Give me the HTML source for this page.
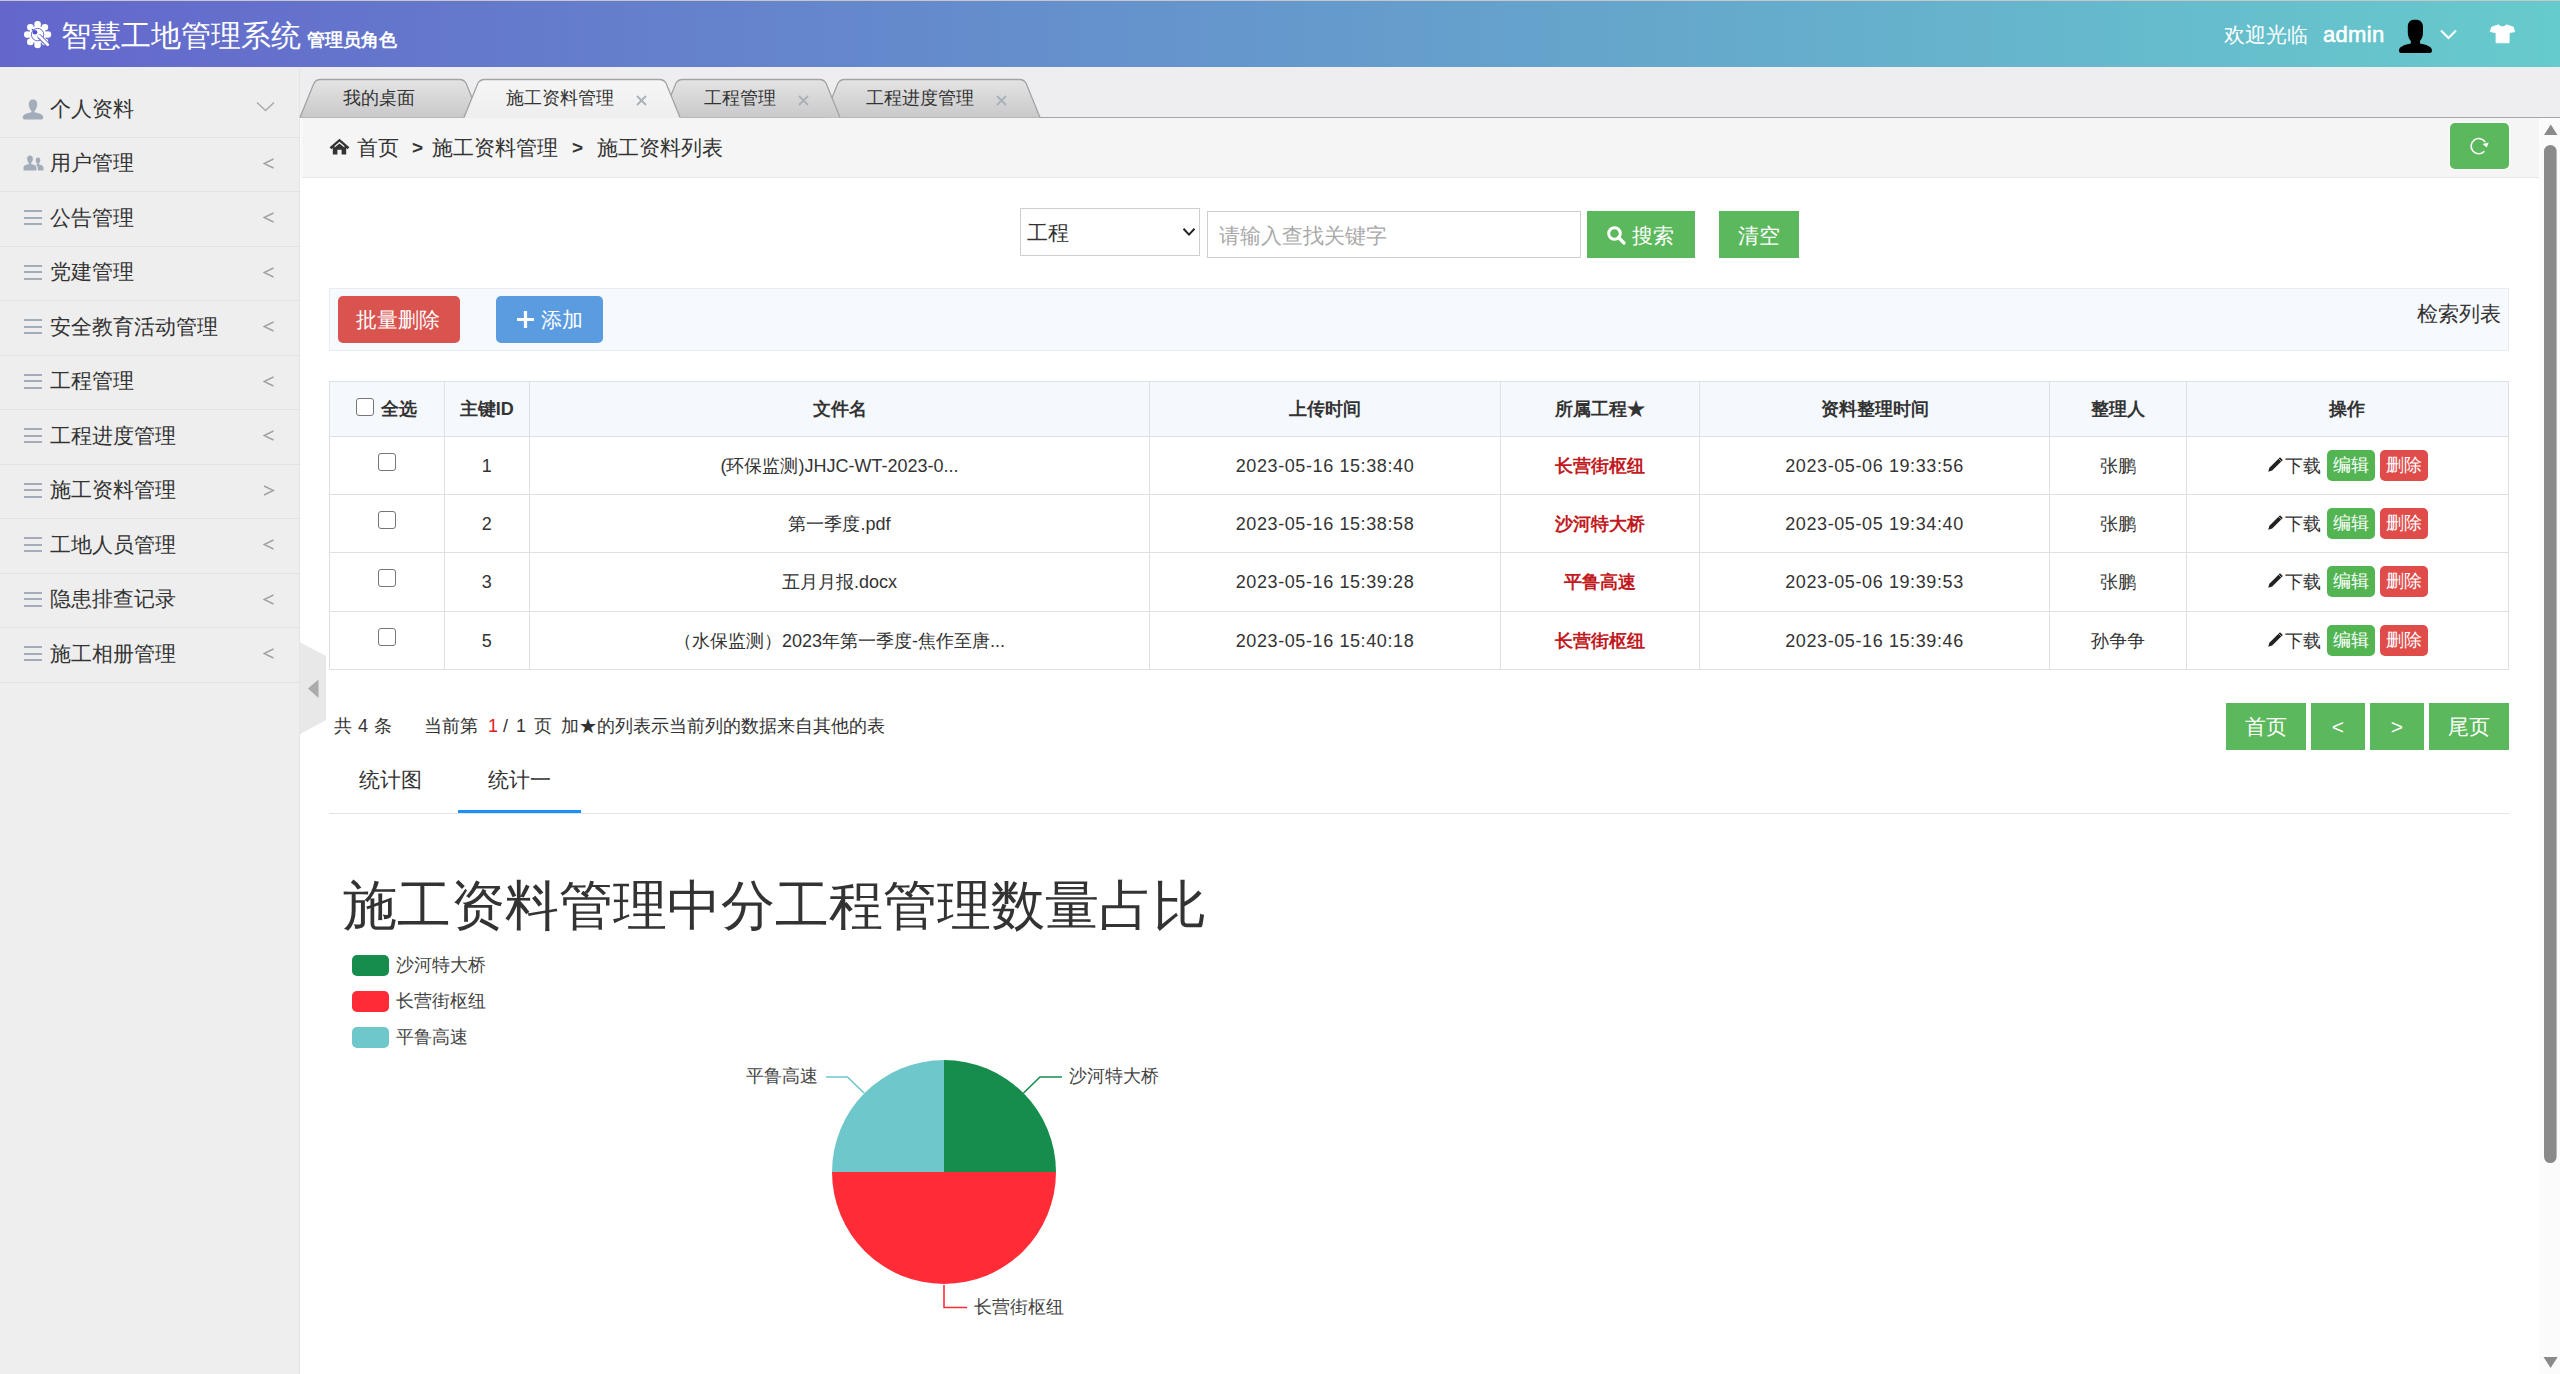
<!DOCTYPE html>
<html><head><meta charset="utf-8">
<style>
*{box-sizing:border-box;margin:0;padding:0}
html,body{width:2560px;height:1374px;overflow:hidden;background:#fff;font-family:"Liberation Sans",sans-serif;color:#333}
.a{position:absolute;white-space:nowrap}
#hdr{left:0;top:0;width:2560px;height:67px;background:linear-gradient(to right,#6466cc,#66cbcc)}
#hdr .topline{left:0;top:0;width:2560px;height:1px;background:#c6c6cc}
#side{left:0;top:67px;width:300px;height:1307px;background:#eeeeee}
.sitem{left:0;width:299px;height:20px}
.sdiv{left:0;width:299px;height:1px;background:#e2e2e2}
.sdiv2{left:0;width:299px;height:1px;background:#e9e9e9}
.stxt{left:50px;font-size:21px;line-height:24px;color:#333}
.sarr{left:262px;font-size:16px;color:#999}
.ham{left:24px;width:18px;height:14px}
.ham i{position:absolute;left:0;width:18px;height:2px;background:#a3acba}
#tabbar{left:300px;top:67px;width:2260px;height:51px;background:#eeeef0}
.ttxt{font-size:18px;line-height:20px;color:#333}
.tx{font-size:17px;line-height:20px;color:#aab2bc}
#frame{left:300px;top:118px;width:2239px;height:1256px;background:#fff}
#crumb{left:0;top:0;width:2239px;height:60px;background:#f5f5f5;border-bottom:1px solid #e5e5e5;border-left:2px solid #f9f9f9}
.btn{color:#fff;text-align:center}
.green{background:#5cb85c}
.red{background:#d9534f}
.tc{text-align:center;font-size:18px;color:#333}
.cb{display:inline-block;width:18px;height:18px;border:1.5px solid #767676;border-radius:3px;background:#fff;vertical-align:middle}
.sbtn{display:inline-block;width:48px;height:31px;line-height:31px;border-radius:5px;color:#fff;vertical-align:middle;position:relative;top:-2px}
.pbtn{top:703px;height:47px;line-height:47px;background:#5cb85c;color:#fff;font-size:21px;text-align:center}
.leg{left:396px;font-size:18px;line-height:24px;color:#444}
</style></head>
<body>
<!-- HEADER -->
<div id="hdr" class="a">
  <div class="a topline"></div>
  <svg class="a" style="left:23px;top:20px" width="30" height="30" viewBox="-14.6 -14.6 30 30">
    <circle cx="0" cy="0" r="8.8" fill="#fff"/><circle cx="0.00" cy="-10.30" r="3.3" fill="#fff"/><circle cx="7.28" cy="-7.28" r="3.3" fill="#fff"/><circle cx="10.30" cy="0.00" r="3.3" fill="#fff"/><circle cx="7.28" cy="7.28" r="3.3" fill="#fff"/><circle cx="0.00" cy="10.30" r="3.3" fill="#fff"/><circle cx="-7.28" cy="7.28" r="3.3" fill="#fff"/><circle cx="-10.30" cy="0.00" r="3.3" fill="#fff"/><circle cx="-7.28" cy="-7.28" r="3.3" fill="#fff"/>
    <circle cx="0" cy="0" r="6.2" fill="none" stroke="#5a5cc8" stroke-width="0.9"/>
    <path d="M2.2,2.2 L10.2,10.2" stroke="#5a5cc8" stroke-width="4.6" stroke-linecap="round"/>
    <path d="M1.5,1.5 L10.2,10.2" stroke="#fff" stroke-width="2.8" stroke-linecap="round"/>
    <circle cx="-2.6" cy="-2.4" r="2.3" fill="#4f52d0"/>
    <path d="M-4.6,-3.6 L-3.6,-4.6 L-5.6,-6.2 L-6.2,-5.6 Z" fill="#4f52d0"/>
  </svg>
  <div class="a" style="left:61px;top:18px;font-size:30px;line-height:36px;color:#fff">智慧工地管理系统</div>
  <div class="a" style="left:307px;top:28px;font-size:18px;line-height:24px;color:#fff;font-weight:bold">管理员角色</div>
  <div class="a" style="left:2224px;top:22px;font-size:21px;line-height:25px;color:#fff">欢迎光临</div>
  <div class="a" style="left:2323px;top:22px;font-size:22px;line-height:25px;color:#fff;-webkit-text-stroke:0.6px #fff;letter-spacing:0.3px">admin</div>
  <svg class="a" style="left:2397px;top:18px" width="37" height="37" viewBox="0 0 37 37">
    <path d="M17.5,1.8 C13,1.8 10.8,4.5 10.8,9 L10.8,14.5 C10.8,18.5 12.3,21.5 13.8,23 L13.8,25.5 C8,26.5 2,28.5 2,32.5 C2,34.5 3,35 5,35 L32,35 C34,35 35,34.5 35,32.5 C35,28.5 29,26.5 23,25.5 L23,23 C24.5,21.5 26,18.5 26,14.5 L26,9 C26,4.5 23.5,1.8 18.5,1.8 Z" fill="#000"/>
  </svg>
  <svg class="a" style="left:2439px;top:28px" width="19" height="12" viewBox="0 0 19 12">
    <polyline points="2,2.5 9.5,10 17,2.5" fill="none" stroke="#fff" stroke-width="2"/>
  </svg>
  <svg class="a" style="left:2489px;top:23px" width="27" height="21" viewBox="0 0 27 21">
    <path d="M9.6,1.8 Q13.4,5.8 17.6,1.8 L24.2,4 L25.8,8.6 L20.2,9.8 L20.2,19.8 L7,19.8 L7,9.8 L1.2,8.6 L2.8,4 Z" fill="#fff" stroke="#fff" stroke-width="0.8" stroke-linejoin="round"/>
  </svg>
</div>
</div>
<div class="a" style="left:0;top:67px;width:2560px;height:1px;background:#f2eef4"></div>
<div class="a" style="left:0;top:68px;width:2560px;height:1px;background:#e6e8f4"></div>

<!-- SIDEBAR -->
<div id="side" class="a"></div>
<div class="a stxt" style="top:96.5px">个人资料</div>
<svg class="a" style="left:22px;top:98.5px" width="22" height="21" viewBox="0 0 22 21"><path d="M11,0.5 C8,0.5 6.6,2.6 6.8,5.5 C7,8.2 8,10.5 9.5,12 L9.5,13.3 C6,14.2 1.5,15 0.8,17.8 C0.6,19.2 1.2,20.5 2.5,20.5 L19.5,20.5 C20.8,20.5 21.4,19.2 21.2,17.8 C20.5,15 16,14.2 12.5,13.3 L12.5,12 C14,10.5 15,8.2 15.2,5.5 C15.4,2.6 14,0.5 11,0.5Z" fill="#a3acba"/></svg>
<svg class="a" style="left:256px;top:101px" width="19" height="11" viewBox="0 0 19 11"><polyline points="1,1.5 9.5,9.5 18,1.5" fill="none" stroke="#aaa" stroke-width="1.5"/></svg>
<div class="a sdiv" style="top:136.5px"></div>
<div class="a stxt" style="top:151.0px">用户管理</div>
<svg class="a" style="left:23px;top:155.0px" width="21" height="16" viewBox="0 0 21 16"><path d="M7,0.5 C5,0.5 4,2 4.1,4 C4.2,5.8 5,7.3 6,8.2 L6,9 C3.5,9.6 0.6,10.3 0.5,12.5 L0.5,15.5 L13.5,15.5 L13.5,12.5 C13.4,10.3 10.5,9.6 8,9 L8,8.2 C9,7.3 9.8,5.8 9.9,4 C10,2 9,0.5 7,0.5Z" fill="#a3acba"/><path d="M15,2.5 C13.4,2.5 12.6,3.7 12.7,5.3 C12.8,6.7 13.4,7.9 14.2,8.6 L14.2,9.3 C13.6,9.5 13.2,9.7 12.9,9.9 C14,10.6 14.8,11.5 14.8,12.8 L14.8,15.5 L20.5,15.5 L20.5,12.5 C20.4,10.8 18,10 15.8,9.3 L15.8,8.6 C16.6,7.9 17.2,6.7 17.3,5.3 C17.4,3.7 16.6,2.5 15,2.5Z" fill="#a3acba"/></svg>
<svg class="a" style="left:263px;top:157.5px" width="12" height="11" viewBox="0 0 12 11"><polyline points="10.5,1 1,5.5 10.5,10" fill="none" stroke="#a0a0a0" stroke-width="1.4"/></svg>
<div class="a sdiv" style="top:191.0px"></div>
<div class="a stxt" style="top:205.5px">公告管理</div>
<div class="a ham" style="top:210.0px"><i style="top:0"></i><i style="top:6.5px"></i><i style="top:13px"></i></div>
<svg class="a" style="left:263px;top:212.0px" width="12" height="11" viewBox="0 0 12 11"><polyline points="10.5,1 1,5.5 10.5,10" fill="none" stroke="#a0a0a0" stroke-width="1.4"/></svg>
<div class="a sdiv" style="top:245.5px"></div>
<div class="a stxt" style="top:260.0px">党建管理</div>
<div class="a ham" style="top:264.5px"><i style="top:0"></i><i style="top:6.5px"></i><i style="top:13px"></i></div>
<svg class="a" style="left:263px;top:266.5px" width="12" height="11" viewBox="0 0 12 11"><polyline points="10.5,1 1,5.5 10.5,10" fill="none" stroke="#a0a0a0" stroke-width="1.4"/></svg>
<div class="a sdiv" style="top:300.0px"></div>
<div class="a stxt" style="top:314.5px">安全教育活动管理</div>
<div class="a ham" style="top:319.0px"><i style="top:0"></i><i style="top:6.5px"></i><i style="top:13px"></i></div>
<svg class="a" style="left:263px;top:321.0px" width="12" height="11" viewBox="0 0 12 11"><polyline points="10.5,1 1,5.5 10.5,10" fill="none" stroke="#a0a0a0" stroke-width="1.4"/></svg>
<div class="a sdiv" style="top:354.5px"></div>
<div class="a stxt" style="top:369.0px">工程管理</div>
<div class="a ham" style="top:373.5px"><i style="top:0"></i><i style="top:6.5px"></i><i style="top:13px"></i></div>
<svg class="a" style="left:263px;top:375.5px" width="12" height="11" viewBox="0 0 12 11"><polyline points="10.5,1 1,5.5 10.5,10" fill="none" stroke="#a0a0a0" stroke-width="1.4"/></svg>
<div class="a sdiv" style="top:409.0px"></div>
<div class="a stxt" style="top:423.5px">工程进度管理</div>
<div class="a ham" style="top:428.0px"><i style="top:0"></i><i style="top:6.5px"></i><i style="top:13px"></i></div>
<svg class="a" style="left:263px;top:430.0px" width="12" height="11" viewBox="0 0 12 11"><polyline points="10.5,1 1,5.5 10.5,10" fill="none" stroke="#a0a0a0" stroke-width="1.4"/></svg>
<div class="a sdiv" style="top:463.5px"></div>
<div class="a stxt" style="top:478.0px">施工资料管理</div>
<div class="a ham" style="top:482.5px"><i style="top:0"></i><i style="top:6.5px"></i><i style="top:13px"></i></div>
<svg class="a" style="left:263px;top:484.5px" width="12" height="11" viewBox="0 0 12 11"><polyline points="1,1 10.5,5.5 1,10" fill="none" stroke="#a0a0a0" stroke-width="1.4"/></svg>
<div class="a sdiv" style="top:518.0px"></div>
<div class="a stxt" style="top:532.5px">工地人员管理</div>
<div class="a ham" style="top:537.0px"><i style="top:0"></i><i style="top:6.5px"></i><i style="top:13px"></i></div>
<svg class="a" style="left:263px;top:539.0px" width="12" height="11" viewBox="0 0 12 11"><polyline points="10.5,1 1,5.5 10.5,10" fill="none" stroke="#a0a0a0" stroke-width="1.4"/></svg>
<div class="a sdiv" style="top:572.5px"></div>
<div class="a stxt" style="top:587.0px">隐患排查记录</div>
<div class="a ham" style="top:591.5px"><i style="top:0"></i><i style="top:6.5px"></i><i style="top:13px"></i></div>
<svg class="a" style="left:263px;top:593.5px" width="12" height="11" viewBox="0 0 12 11"><polyline points="10.5,1 1,5.5 10.5,10" fill="none" stroke="#a0a0a0" stroke-width="1.4"/></svg>
<div class="a sdiv" style="top:627.0px"></div>
<div class="a stxt" style="top:641.5px">施工相册管理</div>
<div class="a ham" style="top:646.0px"><i style="top:0"></i><i style="top:6.5px"></i><i style="top:13px"></i></div>
<svg class="a" style="left:263px;top:648.0px" width="12" height="11" viewBox="0 0 12 11"><polyline points="10.5,1 1,5.5 10.5,10" fill="none" stroke="#a0a0a0" stroke-width="1.4"/></svg>
<div class="a sdiv" style="top:681.5px"></div>
<div class="a" style="left:299px;top:69px;width:1px;height:1305px;background:#e4e4e4"></div>
<div class="a" style="left:300px;top:69px;width:2px;height:1305px;background:#fbfbfb"></div>

<!-- TABBAR -->
<div id="tabbar" class="a"></div>
<div class="a" style="left:300px;top:116.5px;width:2260px;height:1.3px;background:#a6a6a6"></div>
<svg class="a" style="left:0;top:0" width="1100" height="125">
<defs><linearGradient id="gi" x1="0" y1="0" x2="0" y2="1"><stop offset="0" stop-color="#e4e4e4"/><stop offset="1" stop-color="#c9c9cb"/></linearGradient>
<linearGradient id="ga" x1="0" y1="0" x2="0" y2="1"><stop offset="0" stop-color="#f6f6f6"/><stop offset="1" stop-color="#eeeeee"/></linearGradient></defs>

<path d="M824,117.5 L824,117.5 L837.8,83.5 Q840,79.5 844.5,79.5 L1019.5,79.5 Q1024,79.5 1026.2,83.5 L1040,117.5 L1040,117.5 Z" fill="url(#gi)"/>
<path d="M824,117.5 L837.8,83.5 Q840,79.5 844.5,79.5 L1019.5,79.5 Q1024,79.5 1026.2,83.5 L1040,117.5" fill="none" stroke="#a3a3a3" stroke-width="1.3"/>
<path d="M662,117.5 L662,117.5 L675.8,83.5 Q678,79.5 682.5,79.5 L819.5,79.5 Q824,79.5 826.2,83.5 L840,117.5 L840,117.5 Z" fill="url(#gi)"/>
<path d="M662,117.5 L675.8,83.5 Q678,79.5 682.5,79.5 L819.5,79.5 Q824,79.5 826.2,83.5 L840,117.5" fill="none" stroke="#a3a3a3" stroke-width="1.3"/>
<path d="M300,117.5 L300,117.5 L313.8,83.5 Q316,79.5 320.5,79.5 L459.5,79.5 Q464,79.5 466.2,83.5 L480,117.5 L480,117.5 Z" fill="url(#gi)"/>
<path d="M300,117.5 L313.8,83.5 Q316,79.5 320.5,79.5 L459.5,79.5 Q464,79.5 466.2,83.5 L480,117.5" fill="none" stroke="#a3a3a3" stroke-width="1.3"/>
<path d="M464,118.5 L464,117.5 L477.8,83.5 Q480,79.5 484.5,79.5 L659.5,79.5 Q664,79.5 666.2,83.5 L680,117.5 L680,118.5 Z" fill="url(#ga)"/>
<path d="M464,117.5 L477.8,83.5 Q480,79.5 484.5,79.5 L659.5,79.5 Q664,79.5 666.2,83.5 L680,117.5" fill="none" stroke="#a3a3a3" stroke-width="1.3"/>
</svg>
<div class="a ttxt" style="left:343px;top:88px">我的桌面</div>
<div class="a ttxt" style="left:506px;top:88px">施工资料管理</div>
<div class="a ttxt" style="left:704px;top:88px">工程管理</div>
<div class="a ttxt" style="left:866px;top:88px">工程进度管理</div>
<svg class="a" style="left:635.5px;top:94.5px" width="11" height="11" viewBox="0 0 11 11"><path d="M1,1 L10,10 M10,1 L1,10" stroke="#a9b0ba" stroke-width="1.8"/></svg>
<svg class="a" style="left:797.5px;top:94.5px" width="11" height="11" viewBox="0 0 11 11"><path d="M1,1 L10,10 M10,1 L1,10" stroke="#a9b0ba" stroke-width="1.8"/></svg>
<svg class="a" style="left:995.5px;top:94.5px" width="11" height="11" viewBox="0 0 11 11"><path d="M1,1 L10,10 M10,1 L1,10" stroke="#a9b0ba" stroke-width="1.8"/></svg>

<!-- FRAME -->
<div id="frame" class="a">
</div>


<!-- BREADCRUMB -->
<div class="a" style="left:300px;top:118px;width:2239px;height:60px;background:#f5f5f5;border-bottom:1px solid #e6e6e6"></div>
<div class="a" style="left:300px;top:118px;width:2px;height:60px;background:#fafafa"></div>
<svg class="a" style="left:329px;top:138px" width="21" height="17" viewBox="0 0 21 17">
  <path d="M10.5,0.8 L0.6,9.3 L2.4,11.2 L3.8,10 L3.8,16.4 L8.4,16.4 L8.4,11.8 L12.6,11.8 L12.6,16.4 L17.2,16.4 L17.2,10 L18.6,11.2 L20.4,9.3 Z" fill="#333"/>
  <path d="M10.5,3.8 L5.6,8.1 L5.6,9.6 L10.5,5.4 L15.4,9.6 L15.4,8.1 Z" fill="#f5f5f5"/>
</svg>
<div class="a" style="left:357px;top:135px;font-size:21px;line-height:25px;color:#333">首页</div>
<div class="a" style="left:412px;top:135px;font-size:19px;line-height:25px;color:#333;font-weight:bold">&gt;</div>
<div class="a" style="left:432px;top:135px;font-size:21px;line-height:25px;color:#333">施工资料管理</div>
<div class="a" style="left:572px;top:135px;font-size:19px;line-height:25px;color:#333;font-weight:bold">&gt;</div>
<div class="a" style="left:597px;top:135px;font-size:21px;line-height:25px;color:#333">施工资料列表</div>
<div class="a" style="left:2450px;top:123px;width:59px;height:46px;background:#5cb85c;border-radius:5px;box-shadow:0 0 2px 1px rgba(255,255,255,.8)"></div>
<svg class="a" style="left:2467px;top:134px" width="24" height="24" viewBox="0 0 24 24">
  <path d="M17.4,17.2 A7.6,7.6 0 1 1 18.2,8.2" fill="none" stroke="#fff" stroke-width="1.6"/>
  <path d="M15.6,10 L21.6,8.6 L19.8,13.4 Z" fill="#fff"/>
</svg>

<!-- SEARCH -->
<div class="a" style="left:1020px;top:208px;width:180px;height:48px;background:#fff;border:1px solid #cfcfcf"></div>
<div class="a" style="left:1027px;top:220px;font-size:21px;line-height:25px;color:#333">工程</div>
<svg class="a" style="left:1182px;top:227px" width="14" height="10" viewBox="0 0 14 10"><polyline points="1.5,1.8 7,7.6 12.5,1.8" fill="none" stroke="#222" stroke-width="2"/></svg>
<div class="a" style="left:1207px;top:211px;width:374px;height:47px;background:#fff;border:1px solid #cfcfcf"></div>
<div class="a" style="left:1219px;top:223px;font-size:21px;line-height:25px;color:#a9a9a9">请输入查找关键字</div>
<div class="a" style="left:1587px;top:211px;width:108px;height:47px;background:#5cb85c"></div>
<svg class="a" style="left:1606px;top:225px" width="21" height="21" viewBox="0 0 21 21"><circle cx="8.5" cy="8.5" r="5.8" fill="none" stroke="#fff" stroke-width="3"/><path d="M12.5,12.5 L18,18" stroke="#fff" stroke-width="3.4" stroke-linecap="round"/></svg>
<div class="a" style="left:1632px;top:223px;font-size:21px;line-height:25px;color:#fff">搜索</div>
<div class="a" style="left:1719px;top:211px;width:80px;height:47px;background:#5cb85c"></div>
<div class="a" style="left:1738px;top:223px;font-size:21px;line-height:25px;color:#fff">清空</div>

<!-- TOOLBAR -->
<div class="a" style="left:329px;top:288px;width:2180px;height:63px;background:#f6f9fd;border:1px solid #e8ecf0"></div>
<div class="a" style="left:338px;top:296px;width:122px;height:47px;background:#d9534f;border-radius:5px"></div>
<div class="a" style="left:356px;top:307px;font-size:21px;line-height:25px;color:#fff">批量删除</div>
<div class="a" style="left:496px;top:296px;width:107px;height:47px;background:#5b9ce0;border-radius:5px"></div>
<svg class="a" style="left:516px;top:310px" width="19" height="19" viewBox="0 0 19 19"><path d="M9.5,1 L9.5,18 M1,9.5 L18,9.5" stroke="#fff" stroke-width="3.2"/></svg>
<div class="a" style="left:541px;top:307px;font-size:21px;line-height:25px;color:#fff">添加</div>
<div class="a" style="left:2417px;top:301px;font-size:21px;line-height:25px;color:#333">检索列表</div>

<!-- TABLE -->
<div class="a" style="left:330px;top:381px;width:2178px;height:55px;background:#f5f8fc"></div>
<div class="a" style="left:329px;top:381px;width:2180px;height:1px;background:#dde1e6"></div>
<div class="a" style="left:329px;top:436px;width:2180px;height:1px;background:#dde1e6"></div>
<div class="a" style="left:329px;top:494px;width:2180px;height:1px;background:#dde1e6"></div>
<div class="a" style="left:329px;top:552px;width:2180px;height:1px;background:#dde1e6"></div>
<div class="a" style="left:329px;top:611px;width:2180px;height:1px;background:#dde1e6"></div>
<div class="a" style="left:329px;top:669px;width:2180px;height:1px;background:#dde1e6"></div>
<div class="a" style="left:329px;top:381px;width:1px;height:289px;background:#dde1e6"></div>
<div class="a" style="left:444px;top:381px;width:1px;height:289px;background:#dde1e6"></div>
<div class="a" style="left:529px;top:381px;width:1px;height:289px;background:#dde1e6"></div>
<div class="a" style="left:1149px;top:381px;width:1px;height:289px;background:#dde1e6"></div>
<div class="a" style="left:1500px;top:381px;width:1px;height:289px;background:#dde1e6"></div>
<div class="a" style="left:1699px;top:381px;width:1px;height:289px;background:#dde1e6"></div>
<div class="a" style="left:2049px;top:381px;width:1px;height:289px;background:#dde1e6"></div>
<div class="a" style="left:2186px;top:381px;width:1px;height:289px;background:#dde1e6"></div>
<div class="a" style="left:2508px;top:381px;width:1px;height:289px;background:#dde1e6"></div>
<div class="a tc" style="left:329.5px;top:382px;width:114.5px;height:55px;line-height:55px;font-weight:bold"><span class="cb" style="vertical-align:-1px;margin-right:7px"></span>全选</div>
<div class="a tc" style="left:444.0px;top:382px;width:85.5px;height:55px;line-height:55px;font-weight:bold">主键ID</div>
<div class="a tc" style="left:529.5px;top:382px;width:620.0px;height:55px;line-height:55px;font-weight:bold">文件名</div>
<div class="a tc" style="left:1149.5px;top:382px;width:351.0px;height:55px;line-height:55px;font-weight:bold">上传时间</div>
<div class="a tc" style="left:1500.5px;top:382px;width:199.0px;height:55px;line-height:55px;font-weight:bold">所属工程★</div>
<div class="a tc" style="left:1699.5px;top:382px;width:350.0px;height:55px;line-height:55px;font-weight:bold">资料整理时间</div>
<div class="a tc" style="left:2049.5px;top:382px;width:137.0px;height:55px;line-height:55px;font-weight:bold">整理人</div>
<div class="a tc" style="left:2186.5px;top:382px;width:321.5px;height:55px;line-height:55px;font-weight:bold">操作</div>
<div class="a tc" style="left:329.5px;top:437px;width:114.5px;height:58px;line-height:58px;"><span class="cb" style="position:relative;top:-5px"></span></div>
<div class="a tc" style="left:444.0px;top:437px;width:85.5px;height:58px;line-height:58px;">1</div>
<div class="a tc" style="left:529.5px;top:437px;width:620.0px;height:58px;line-height:58px;">(环保监测)JHJC-WT-2023-0...</div>
<div class="a tc" style="left:1149.5px;top:437px;width:351.0px;height:58px;line-height:58px;letter-spacing:0.6px">2023-05-16 15:38:40</div>
<div class="a tc" style="left:1500.5px;top:437px;width:199.0px;height:58px;line-height:58px;font-weight:bold;color:#c21a22">长营街枢纽</div>
<div class="a tc" style="left:1699.5px;top:437px;width:350.0px;height:58px;line-height:58px;letter-spacing:0.6px">2023-05-06 19:33:56</div>
<div class="a tc" style="left:2049.5px;top:437px;width:137.0px;height:58px;line-height:58px;">张鹏</div>
<div class="a tc" style="left:2186.5px;top:437px;width:321.5px;height:58px;line-height:58px;"><svg style="vertical-align:-1px" width="17" height="17" viewBox="0 0 17 17"><path d="M13,1.2 L15.8,4 L5.2,14.6 L1.2,15.8 L2.4,11.8 Z" fill="#222"/><path d="M11.6,2.6 L14.4,5.4" stroke="#fff" stroke-width="0.6"/></svg><span style="margin-left:1px">下载</span><span class="sbtn" style="background:#52b552;margin-left:6px">编辑</span><span class="sbtn" style="background:#e04c4a;margin-left:5px">删除</span></div>
<div class="a tc" style="left:329.5px;top:495px;width:114.5px;height:58px;line-height:58px;"><span class="cb" style="position:relative;top:-5px"></span></div>
<div class="a tc" style="left:444.0px;top:495px;width:85.5px;height:58px;line-height:58px;">2</div>
<div class="a tc" style="left:529.5px;top:495px;width:620.0px;height:58px;line-height:58px;">第一季度.pdf</div>
<div class="a tc" style="left:1149.5px;top:495px;width:351.0px;height:58px;line-height:58px;letter-spacing:0.6px">2023-05-16 15:38:58</div>
<div class="a tc" style="left:1500.5px;top:495px;width:199.0px;height:58px;line-height:58px;font-weight:bold;color:#c21a22">沙河特大桥</div>
<div class="a tc" style="left:1699.5px;top:495px;width:350.0px;height:58px;line-height:58px;letter-spacing:0.6px">2023-05-05 19:34:40</div>
<div class="a tc" style="left:2049.5px;top:495px;width:137.0px;height:58px;line-height:58px;">张鹏</div>
<div class="a tc" style="left:2186.5px;top:495px;width:321.5px;height:58px;line-height:58px;"><svg style="vertical-align:-1px" width="17" height="17" viewBox="0 0 17 17"><path d="M13,1.2 L15.8,4 L5.2,14.6 L1.2,15.8 L2.4,11.8 Z" fill="#222"/><path d="M11.6,2.6 L14.4,5.4" stroke="#fff" stroke-width="0.6"/></svg><span style="margin-left:1px">下载</span><span class="sbtn" style="background:#52b552;margin-left:6px">编辑</span><span class="sbtn" style="background:#e04c4a;margin-left:5px">删除</span></div>
<div class="a tc" style="left:329.5px;top:553px;width:114.5px;height:59px;line-height:59px;"><span class="cb" style="position:relative;top:-5px"></span></div>
<div class="a tc" style="left:444.0px;top:553px;width:85.5px;height:59px;line-height:59px;">3</div>
<div class="a tc" style="left:529.5px;top:553px;width:620.0px;height:59px;line-height:59px;">五月月报.docx</div>
<div class="a tc" style="left:1149.5px;top:553px;width:351.0px;height:59px;line-height:59px;letter-spacing:0.6px">2023-05-16 15:39:28</div>
<div class="a tc" style="left:1500.5px;top:553px;width:199.0px;height:59px;line-height:59px;font-weight:bold;color:#c21a22">平鲁高速</div>
<div class="a tc" style="left:1699.5px;top:553px;width:350.0px;height:59px;line-height:59px;letter-spacing:0.6px">2023-05-06 19:39:53</div>
<div class="a tc" style="left:2049.5px;top:553px;width:137.0px;height:59px;line-height:59px;">张鹏</div>
<div class="a tc" style="left:2186.5px;top:553px;width:321.5px;height:59px;line-height:59px;"><svg style="vertical-align:-1px" width="17" height="17" viewBox="0 0 17 17"><path d="M13,1.2 L15.8,4 L5.2,14.6 L1.2,15.8 L2.4,11.8 Z" fill="#222"/><path d="M11.6,2.6 L14.4,5.4" stroke="#fff" stroke-width="0.6"/></svg><span style="margin-left:1px">下载</span><span class="sbtn" style="background:#52b552;margin-left:6px">编辑</span><span class="sbtn" style="background:#e04c4a;margin-left:5px">删除</span></div>
<div class="a tc" style="left:329.5px;top:612px;width:114.5px;height:58px;line-height:58px;"><span class="cb" style="position:relative;top:-5px"></span></div>
<div class="a tc" style="left:444.0px;top:612px;width:85.5px;height:58px;line-height:58px;">5</div>
<div class="a tc" style="left:529.5px;top:612px;width:620.0px;height:58px;line-height:58px;">（水保监测）2023年第一季度-焦作至唐...</div>
<div class="a tc" style="left:1149.5px;top:612px;width:351.0px;height:58px;line-height:58px;letter-spacing:0.6px">2023-05-16 15:40:18</div>
<div class="a tc" style="left:1500.5px;top:612px;width:199.0px;height:58px;line-height:58px;font-weight:bold;color:#c21a22">长营街枢纽</div>
<div class="a tc" style="left:1699.5px;top:612px;width:350.0px;height:58px;line-height:58px;letter-spacing:0.6px">2023-05-16 15:39:46</div>
<div class="a tc" style="left:2049.5px;top:612px;width:137.0px;height:58px;line-height:58px;">孙争争</div>
<div class="a tc" style="left:2186.5px;top:612px;width:321.5px;height:58px;line-height:58px;"><svg style="vertical-align:-1px" width="17" height="17" viewBox="0 0 17 17"><path d="M13,1.2 L15.8,4 L5.2,14.6 L1.2,15.8 L2.4,11.8 Z" fill="#222"/><path d="M11.6,2.6 L14.4,5.4" stroke="#fff" stroke-width="0.6"/></svg><span style="margin-left:1px">下载</span><span class="sbtn" style="background:#52b552;margin-left:6px">编辑</span><span class="sbtn" style="background:#e04c4a;margin-left:5px">删除</span></div>


<!-- PAGINATION -->
<div class="a" style="left:334px;top:714px;font-size:18px;line-height:24px;color:#333;word-spacing:1px">共 4 条</div>
<div class="a" style="left:424px;top:714px;font-size:18px;line-height:24px;color:#333">当前第</div>
<div class="a" style="left:488px;top:714px;font-size:18px;line-height:24px;color:#e02020">1</div>
<div class="a" style="left:503px;top:714px;font-size:18px;line-height:24px;color:#333;word-spacing:3px">/ 1 页</div>
<div class="a" style="left:561px;top:714px;font-size:18px;line-height:24px;color:#333">加★的列表示当前列的数据来自其他的表</div>
<div class="a pbtn" style="left:2226px;width:80px">首页</div>
<div class="a pbtn" style="left:2311px;width:54px">&lt;</div>
<div class="a pbtn" style="left:2370px;width:54px">&gt;</div>
<div class="a pbtn" style="left:2429px;width:80px">尾页</div>

<!-- STAT TABS -->
<div class="a" style="left:329px;top:813px;width:2180px;height:1px;background:#e4e4e4"></div>
<div class="a" style="left:359px;top:767px;font-size:21px;line-height:25px;color:#333">统计图</div>
<div class="a" style="left:488px;top:767px;font-size:21px;line-height:25px;color:#333">统计一</div>
<div class="a" style="left:458px;top:810px;width:123px;height:3px;background:#1890ff"></div>

<!-- CHART -->
<div class="a" style="left:343px;top:873px;font-size:54px;line-height:64px;color:#333">施工资料管理中分工程管理数量占比</div>
<div class="a" style="left:352px;top:955px;width:37px;height:21px;border-radius:5px;background:#168d4c"></div>
<div class="a" style="left:352px;top:991px;width:37px;height:21px;border-radius:5px;background:#ff2c37"></div>
<div class="a" style="left:352px;top:1027px;width:37px;height:21px;border-radius:5px;background:#6ec7ca"></div>
<div class="a leg" style="top:953px">沙河特大桥</div>
<div class="a leg" style="top:989px">长营街枢纽</div>
<div class="a leg" style="top:1025px">平鲁高速</div>
<svg class="a" style="left:700px;top:1040px" width="500" height="300" viewBox="700 1040 500 300">
  <path d="M944,1172 L944,1060 A112,112 0 0 1 1056,1172 Z" fill="#168d4c"/>
  <path d="M944,1172 L1056,1172 A112,112 0 0 1 832,1172 Z" fill="#ff2c37"/>
  <path d="M944,1172 L832,1172 A112,112 0 0 1 944,1060 Z" fill="#6ec7ca"/>
  <polyline points="826,1077 847.5,1077 864,1093" fill="none" stroke="#6ec7ca" stroke-width="1.6"/>
  <polyline points="1062,1077 1040,1077 1023.5,1093" fill="none" stroke="#168d4c" stroke-width="1.6"/>
  <polyline points="944,1285 944,1307.5 967,1307.5" fill="none" stroke="#ff2c37" stroke-width="1.6"/>
</svg>
<div class="a leg" style="left:746px;top:1064px">平鲁高速</div>
<div class="a leg" style="left:1069px;top:1064px">沙河特大桥</div>
<div class="a leg" style="left:974px;top:1295px">长营街枢纽</div>

<!-- COLLAPSE HANDLE -->
<svg class="a" style="left:299px;top:640px" width="30" height="98" viewBox="299 640 30 98">
  <polygon points="299.5,642 326,656 326,720 299.5,734.5" fill="#e8e8e8"/>
  <polygon points="308,688.5 318.5,679.5 318.5,698" fill="#ababab"/>
</svg>

<!-- SCROLLBAR -->
<div class="a" style="left:2539px;top:118px;width:21px;height:1256px;background:#fbfbfb"></div>
<svg class="a" style="left:2539px;top:118px" width="21" height="1256">
  <polygon points="5,17 18.5,17 11.75,6.5" fill="#8a8a8a"/>
  <rect x="5" y="27" width="12.6" height="1018" rx="6.3" fill="#8a8a8a"/>
  <polygon points="4.5,1239 18.7,1239 11.6,1250" fill="#8a8a8a"/>
</svg>
</body></html>
